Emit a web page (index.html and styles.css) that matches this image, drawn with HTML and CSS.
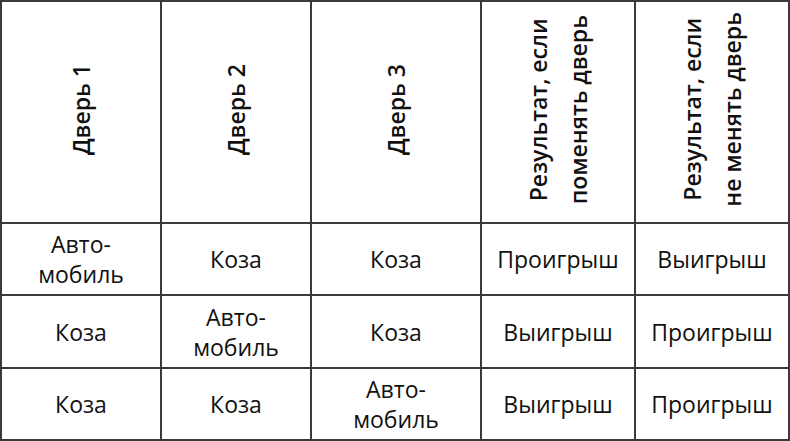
FILE: index.html
```html
<!DOCTYPE html>
<html lang="ru">
<head>
<meta charset="utf-8">
<link rel="stylesheet" href="styles.css">
</head>
<body>
<table class="grid">
  <colgroup>
    <col class="c1"><col class="c2"><col class="c3"><col class="c4"><col class="c5">
  </colgroup>
  <tr class="head">
    <th><div class="vt">Дверь 1</div></th>
    <th><div class="vt">Дверь 2</div></th>
    <th><div class="vt">Дверь 3</div></th>
    <th><div class="vt vt-sm">Результат, если<br>поменять дверь</div></th>
    <th><div class="vt vt-sm">Результат, если<br>не менять дверь</div></th>
  </tr>
  <tr class="r1">
    <td>Авто-<br>мобиль</td>
    <td>Коза</td>
    <td>Коза</td>
    <td>Проигрыш</td>
    <td>Выигрыш</td>
  </tr>
  <tr class="r2">
    <td>Коза</td>
    <td>Авто-<br>мобиль</td>
    <td>Коза</td>
    <td>Выигрыш</td>
    <td>Проигрыш</td>
  </tr>
  <tr class="r3">
    <td>Коза</td>
    <td>Коза</td>
    <td>Авто-<br>мобиль</td>
    <td>Выигрыш</td>
    <td>Проигрыш</td>
  </tr>
</table>
</body>
</html>
```

FILE: styles.css
```css
html, body {
  margin: 0;
  padding: 0;
  background: #ffffff;
}

.grid {
  border-collapse: separate;
  border-spacing: 2px;
  background: #3a3a3a;
  table-layout: fixed;
  width: 790px;
  font-family: "Open Sans", "Noto Sans", sans-serif;
  color: #111111;
}

.c1 { width: 158px; }
.c2 { width: 148px; }
.c3 { width: 168px; }
.c4 { width: 152px; }
.c5 { width: 152px; }

.grid th,
.grid td {
  background: #ffffff;
  padding: 0;
  text-align: center;
  vertical-align: middle;
}

.head { height: 220px; }
.r1 { height: 70px; }
.r2 { height: 71px; }
.r3 { height: 70px; }

.grid td {
  font-size: 23px;
  line-height: 30px;
  font-weight: 400;
}

.vt {
  display: inline-block;
  writing-mode: vertical-rl;
  transform: rotate(180deg);
  font-size: 23px;
  font-weight: 600;
  line-height: 30px;
  text-align: center;
}

.vt-sm {
  line-height: 40px;
}
```
